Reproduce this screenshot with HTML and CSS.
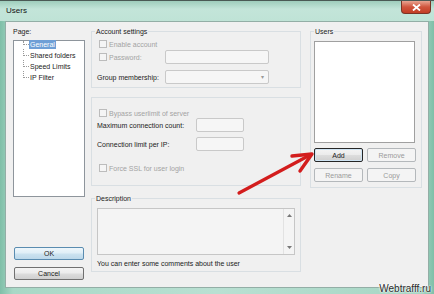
FILE: index.html
```html
<!DOCTYPE html>
<html lang="en">
<head>
  <meta charset="UTF-8" />
  <title>Users</title>
  <link rel="stylesheet" href="styles.css">
</head>
<body>
  <div class="window">
    <div class="titlebar">
      <span class="title">Users</span>
      <span class="close">
        <svg width="9" height="7" viewBox="0 0 9 7"><path d="M1 0.5 L8 6.5 M8 0.5 L1 6.5" stroke="#fff" stroke-width="1.8"/></svg>
      </span>
    </div>

    <div class="client">
      <div class="col-page">
        <div class="caption">Page:</div>
        <div class="tree">
          <div class="nodes">
            <div class="node"><span class="sel">General</span></div>
            <div class="node">Shared folders</div>
            <div class="node">Speed Limits</div>
            <div class="node last">IP Filter</div>
          </div>
        </div>
        <button class="btn default ok">OK</button>
        <button class="btn cancel">Cancel</button>
      </div>

      <div class="col-main">
        <fieldset class="group account">
          <legend>Account settings</legend>
          <div class="row check first">
            <span class="box"></span><span class="off">Enable account</span>
          </div>
          <div class="row field">
            <div class="lbl"><span class="box"></span><span class="off">Password:</span></div>
            <div class="input wide"></div>
          </div>
          <div class="row field gap">
            <div class="lbl">Group membership:</div>
            <div class="input wide select"><span class="caret">&#9662;</span></div>
          </div>
        </fieldset>

        <fieldset class="group limits">
          <div class="row check">
            <span class="box"></span><span class="off">Bypass userlimit of server</span>
          </div>
          <div class="row field">
            <div class="lbl long">Maximum connection count:</div>
            <div class="input small"></div>
          </div>
          <div class="row field gap-s">
            <div class="lbl long">Connection limit per IP:</div>
            <div class="input small"></div>
          </div>
          <div class="row check ssl">
            <span class="box"></span><span class="off">Force SSL for user login</span>
          </div>
        </fieldset>

        <fieldset class="group desc">
          <legend>Description</legend>
          <div class="textarea">
            <div class="scroll">
              <svg width="5" height="3" viewBox="0 0 5 3"><path d="M0 3 L2.5 0 L5 3Z" fill="#777"/></svg>
              <svg width="5" height="3" viewBox="0 0 5 3"><path d="M0 0 L2.5 3 L5 0Z" fill="#777"/></svg>
            </div>
          </div>
          <div class="note">You can enter some comments about the user</div>
        </fieldset>
      </div>

      <div class="col-users">
        <fieldset class="group users">
          <legend>Users</legend>
          <div class="listbox"></div>
          <div class="btn-row">
            <button class="btn focus">Add</button>
            <button class="btn" disabled>Remove</button>
          </div>
          <div class="btn-row">
            <button class="btn" disabled>Rename</button>
            <button class="btn" disabled>Copy</button>
          </div>
        </fieldset>
      </div>
    </div>

    <svg class="arrow" width="434" height="294" viewBox="0 0 434 294">
      <line x1="239" y1="192" x2="310" y2="154" stroke="#d31d1d" stroke-width="3.2" stroke-linecap="round"/>
      <polyline points="292,155 312,153 300,170" fill="none" stroke="#d31d1d" stroke-width="3.4" stroke-linecap="round" stroke-linejoin="round"/>
    </svg>

    <div class="watermark">Webtrafff.ru</div>
  </div>
</body>
</html>
```

FILE: styles.css
```css
body {
  margin: 0;
  font-family: "Liberation Sans", Arial, sans-serif;
  font-size: 7px;
  line-height: 9px;
  color: #222;
}

.window {
  position: relative;
  width: 434px;
  height: 294px;
  box-sizing: border-box;
  padding: 0 5px 6px 5px;
  background: linear-gradient(90deg, #7fbfa8, #a8d8c6 3%, #b9e0d2 50%, #a6d6c4 97%, #7fbfa8);
  border-top: 1px solid #4b5a55;
  overflow: hidden;
}

.titlebar {
  display: flex;
  align-items: flex-start;
  height: 20px;
  margin: 0 -5px;
  padding: 0 3px 0 6px;
  background: linear-gradient(180deg, #9fcdbc, #c3e5d9 40%, #bfe3d6);
}

.title {
  font-size: 8px;
  line-height: 8px;
  margin-top: 6px;
  color: #111;
}

.close {
  margin-left: auto;
  width: 30px;
  height: 13px;
  display: flex;
  align-items: center;
  justify-content: center;
  box-sizing: border-box;
  background: linear-gradient(180deg, #e9a592, #d0553d 50%, #c23d24);
  border: 1px solid #7b3325;
  border-top: none;
  border-radius: 0 0 4px 4px;
}

.client {
  display: flex;
  height: 267px;
  box-sizing: border-box;
  background: #f0f0f0;
  border: 1px solid #93aea6;
}

/* left: page tree + ok/cancel */
.col-page {
  width: 72px;
  margin-left: 7px;
  padding-top: 5px;
  display: flex;
  flex-direction: column;
}

.caption {
  height: 9px;
  padding-left: 0;
}

.tree {
  margin-top: 4px;
  height: 157px;
  box-sizing: border-box;
  background: #fff;
  border: 1px solid #8e959c;
}

.nodes {
  margin-top: -1px;
  padding-left: 15px;
}

.node {
  position: relative;
  height: 9px;
  margin-bottom: 2px;
  padding-left: 1px;
}

.node::before {
  content: "";
  position: absolute;
  left: -6px;
  top: -2px;
  width: 5px;
  height: 6px;
  border-left: 1px dotted #999;
  border-bottom: 1px dotted #999;
}

.node:first-child::before {
  top: 1px;
  height: 3px;
}

.sel {
  display: inline-block;
  margin-left: -1px;
  padding: 0 1px;
  background: #6f9fd6;
  color: #fff;
}

.btn {
  font-family: inherit;
  font-size: 7px;
  line-height: 9px;
  padding: 0;
  height: 14px;
  color: #222;
  border: 1px solid #707070;
  border-radius: 2px;
  background: linear-gradient(180deg, #f4f4f4, #ebebeb 48%, #dddddd 52%, #cfcfcf);
}

.btn.ok {
  margin-top: 50px;
  height: 13px;
  margin-left: 1px;
  width: 70px;
  border-color: #5a8cb0;
  background: linear-gradient(180deg, #eef6fb, #dfeef7 48%, #cde3f0 52%, #bcd8ea);
}

.btn.cancel {
  margin-top: 7px;
  height: 13px;
  margin-left: 1px;
  width: 70px;
}

.btn:disabled {
  color: #9a9a9a;
  border-color: #b4b8bb;
  background: #f4f4f4;
}

.btn.focus {
  border-color: #262626;
  box-shadow: inset 0 0 0 1px #cfe4f3;
}

/* middle: settings groups */
.col-main {
  width: 210px;
  margin-left: 6px;
}

.group {
  margin: 0;
  padding: 0 5px 3px 5px;
  border: 1px solid #d9dfe3;
  min-width: 0;
}

.group legend {
  padding: 0 1px;
  margin-left: -2px;
  line-height: 9px;
  height: 9px;
}

.account {
  margin-top: 5px;
}

.row {
  display: flex;
  align-items: center;
}

.row.check {
  height: 10px;
  padding-left: 2px;
}

.row.first {
  margin-top: 3px;
}

.row.field {
  height: 14px;
  margin-top: 1px;
}

.row.gap {
  margin-top: 6px;
}

.row.gap-s {
  margin-top: 5px;
}

.box {
  width: 8px;
  height: 8px;
  box-sizing: border-box;
  border: 1px solid #bcbcbc;
  background: #f5f5f5;
  margin-right: 2px;
  flex: none;
}

.off {
  color: #a3a3a3;
}

.lbl {
  width: 68px;
  display: flex;
  align-items: center;
}

.lbl .box {
  margin-left: 2px;
}

.lbl.long {
  width: 99px;
}

.input {
  height: 14px;
  box-sizing: border-box;
  border: 1px solid #c9c9c9;
  border-radius: 2px;
  background: #f6f6f6;
}

.input.wide {
  width: 104px;
}

.input.small {
  width: 48px;
}

.select {
  display: flex;
  justify-content: flex-end;
  align-items: center;
}

.caret {
  color: #999;
  font-size: 6px;
  margin-right: 4px;
}

.limits {
  margin-top: 9px;
  padding-top: 10px;
  padding-bottom: 12px;
}

.limits .row.field {
  margin-top: 0;
}

.limits .row.gap-s {
  margin-top: 5px;
}

.row.ssl {
  margin-top: 12px;
}

.desc {
  margin-top: 8px;
}

.textarea {
  margin-top: 5px;
  height: 47px;
  box-sizing: border-box;
  border: 1px solid #c6c6c6;
  background: #f4f4f4;
  display: flex;
  justify-content: flex-end;
}

.scroll {
  width: 10px;
  border-left: 1px solid #e2e2e2;
  display: flex;
  flex-direction: column;
  justify-content: space-between;
  align-items: center;
  padding: 5px 0;
}

.note {
  margin-top: 4px;
  height: 9px;
}

/* right: users list */
.col-users {
  width: 112px;
  margin-left: 9px;
}

.users {
  margin-top: 5px;
  padding: 0 5px 5px 3px;
}

.users legend {
  margin-left: 0;
}

.listbox {
  margin-top: 5px;
  height: 102px;
  width: 101px;
  box-sizing: border-box;
  background: #fff;
  border: 1px solid #a0a0a0;
}

.btn-row {
  display: flex;
  gap: 4px;
  margin-top: 5px;
}

.btn-row + .btn-row {
  margin-top: 6px;
}

.btn-row .btn {
  width: 49px;
}

/* overlays */
.arrow {
  position: absolute;
  left: 0;
  top: 0;
  pointer-events: none;
}

.watermark {
  position: absolute;
  right: 3px;
  bottom: 0;
  font-size: 10px;
  line-height: 11px;
  color: #2a2a2a;
  text-shadow: 0 0 2px #fff, 0 0 2px #fff, 0 0 1px #fff;
}
```
